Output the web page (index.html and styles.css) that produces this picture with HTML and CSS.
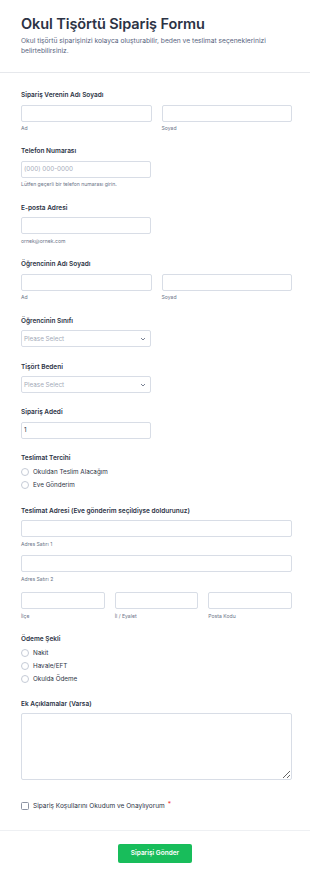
FILE: index.html
```html
<!DOCTYPE html>
<html lang="tr">
<head>
<meta charset="utf-8">
<title>Okul Tişörtü Sipariş Formu</title>
<link rel="stylesheet" href="styles.css">
</head>
<body>
<div class="page">
  <header class="head">
    <h1 class="title">Okul Tişörtü Sipariş Formu</h1>
    <p class="desc">Okul tişörtü siparişinizi kolayca oluşturabilir, beden ve teslimat seçeneklerinizi belirtebilirsiniz.</p>
  </header>

  <form class="form">
    <div class="field">
      <label class="label">Sipariş Verenin Adı Soyadı</label>
      <div class="grid2">
        <div><input class="input" type="text"><div class="sub">Ad</div></div>
        <div><input class="input" type="text"><div class="sub">Soyad</div></div>
      </div>
    </div>

    <div class="field">
      <label class="label">Telefon Numarası</label>
      <input class="input half" type="text" placeholder="(000) 000-0000">
      <div class="sub">Lütfen geçerli bir telefon numarası girin.</div>
    </div>

    <div class="field">
      <label class="label">E-posta Adresi</label>
      <input class="input half" type="text">
      <div class="sub">ornek@ornek.com</div>
    </div>

    <div class="field">
      <label class="label">Öğrencinin Adı Soyadı</label>
      <div class="grid2">
        <div><input class="input" type="text"><div class="sub">Ad</div></div>
        <div><input class="input" type="text"><div class="sub">Soyad</div></div>
      </div>
    </div>

    <div class="field">
      <label class="label">Öğrencinin Sınıfı</label>
      <div class="select half"><span>Please Select</span>
        <svg width="6" height="4" viewBox="0 0 6 4"><path d="M1 1l2 2 2-2" fill="none" stroke="#6b7488" stroke-width="0.9"/></svg>
      </div>
    </div>

    <div class="field">
      <label class="label">Tişört Bedeni</label>
      <div class="select half"><span>Please Select</span>
        <svg width="6" height="4" viewBox="0 0 6 4"><path d="M1 1l2 2 2-2" fill="none" stroke="#6b7488" stroke-width="0.9"/></svg>
      </div>
    </div>

    <div class="field">
      <label class="label">Sipariş Adedi</label>
      <input class="input half" type="text" value="1">
    </div>

    <div class="field">
      <label class="label label-radio">Teslimat Tercihi</label>
      <div class="opt"><span class="radio"></span>Okuldan Teslim Alacağım</div>
      <div class="opt"><span class="radio"></span>Eve Gönderim</div>
    </div>

    <div class="field">
      <label class="label">Teslimat Adresi (Eve gönderim seçildiyse doldurunuz)</label>
      <input class="input" type="text">
      <div class="sub sub-gap">Adres Satırı 1</div>
      <input class="input" type="text">
      <div class="sub sub-gap2">Adres Satırı 2</div>
      <div class="grid3">
        <div><input class="input" type="text"><div class="sub">İlçe</div></div>
        <div><input class="input" type="text"><div class="sub">İl / Eyalet</div></div>
        <div><input class="input" type="text"><div class="sub">Posta Kodu</div></div>
      </div>
    </div>

    <div class="field field-pay">
      <label class="label label-radio">Ödeme Şekli</label>
      <div class="opt"><span class="radio"></span>Nakit</div>
      <div class="opt"><span class="radio"></span>Havale/EFT</div>
      <div class="opt"><span class="radio"></span>Okulda Ödeme</div>
    </div>

    <div class="field">
      <label class="label">Ek Açıklamalar (Varsa)</label>
      <textarea class="textarea"></textarea>
    </div>

    <div class="check-row">
      <span class="checkbox"></span>
      <span>Sipariş Koşullarını Okudum ve Onaylıyorum</span>
      <span class="req">*</span>
    </div>
  </form>

  <div class="footer">
    <button class="submit" type="button">Siparişi Gönder</button>
  </div>
</div>
</body>
</html>
```

FILE: styles.css
```css
* { box-sizing: border-box; }
html, body { margin: 0; padding: 0; background: #ffffff; }
body {
  font-family: Inter, "Noto Sans", "Liberation Sans", sans-serif;
  color: #2c3345;
}
.page { width: 310px; }

.head {
  padding: 14px 18px 15px 21px;
  border-bottom: 1px solid #e6e8ec;
}
.title {
  margin: 0;
  font-size: 14.5px;
  line-height: 20px;
  font-weight: 600;
  color: #2c3345;
  letter-spacing: -0.1px;
}
.desc {
  margin: 2px 0 0;
  font-size: 6.7px;
  line-height: 10.3px;
  color: #57647e;
}

.form { padding: 18.5px 18px 0 21px; }
.field { padding-bottom: 15.4px; }
.field-pay { padding-bottom: 14.5px; }

.label {
  display: block;
  font-size: 6.5px;
  line-height: 9px;
  font-weight: 600;
  color: #2c3345;
  margin-bottom: 4.5px;
}
.label-radio { margin-bottom: 2px; }

.input {
  display: block;
  width: 100%;
  height: 17px;
  margin: 0;
  border: 1px solid #d8dde6;
  border-radius: 2px;
  background: #fff;
  font-family: inherit;
  font-size: 6.3px;
  color: #2c3345;
  padding: 0 0 0 2px;
  outline: none;
}
.input::placeholder { color: #a3aab8; }
.half { width: 130px; }

.sub {
  font-size: 5.1px;
  line-height: 7px;
  margin-top: 3.5px;
  color: #6b7488;
}
.sub-gap { margin-bottom: 7.5px; }
.sub-gap2 { margin-bottom: 9.5px; }

.grid2 {
  display: grid;
  grid-template-columns: 1fr 1fr;
  column-gap: 10px;
}
.grid3 {
  display: grid;
  grid-template-columns: 1fr 1fr 1fr;
  column-gap: 10px;
}

.select {
  height: 17px;
  border: 1px solid #d8dde6;
  border-radius: 2px;
  display: flex;
  align-items: center;
  justify-content: space-between;
  padding: 0 4px 0 2px;
  font-size: 6.3px;
  color: #a3aab8;
}

.opt {
  display: flex;
  align-items: center;
  height: 13px;
  font-size: 6.3px;
  color: #2c3345;
}
.radio {
  width: 8px;
  height: 8px;
  border: 1px solid #c5cbd6;
  border-radius: 50%;
  margin-right: 4px;
  flex: none;
}

.textarea {
  display: block;
  width: 100%;
  height: 67px;
  margin: 0;
  border: 1px solid #d8dde6;
  border-radius: 2px;
  resize: both;
  font-family: inherit;
  outline: none;
}

.check-row {
  display: flex;
  align-items: center;
  height: 9px;
  margin-top: 6px;
  margin-bottom: 19.5px;
  font-size: 6.5px;
  color: #2c3345;
}
.checkbox {
  width: 8px;
  height: 8px;
  border: 1px solid #8c93a3;
  border-radius: 1.5px;
  margin-right: 4px;
  flex: none;
}
.req {
  color: #f23a3c;
  margin-left: 3px;
  font-size: 6.5px;
  position: relative;
  top: -2px;
}

.footer {
  border-top: 1px solid #eef0f3;
  padding: 12.5px 0 17px;
  display: flex;
  justify-content: center;
}
.submit {
  width: 74px;
  height: 19.5px;
  border: none;
  border-radius: 2px;
  background: #18bd5b;
  color: #fff;
  font-family: inherit;
  font-size: 6.5px;
  font-weight: 600;
  padding: 0;
}
```
